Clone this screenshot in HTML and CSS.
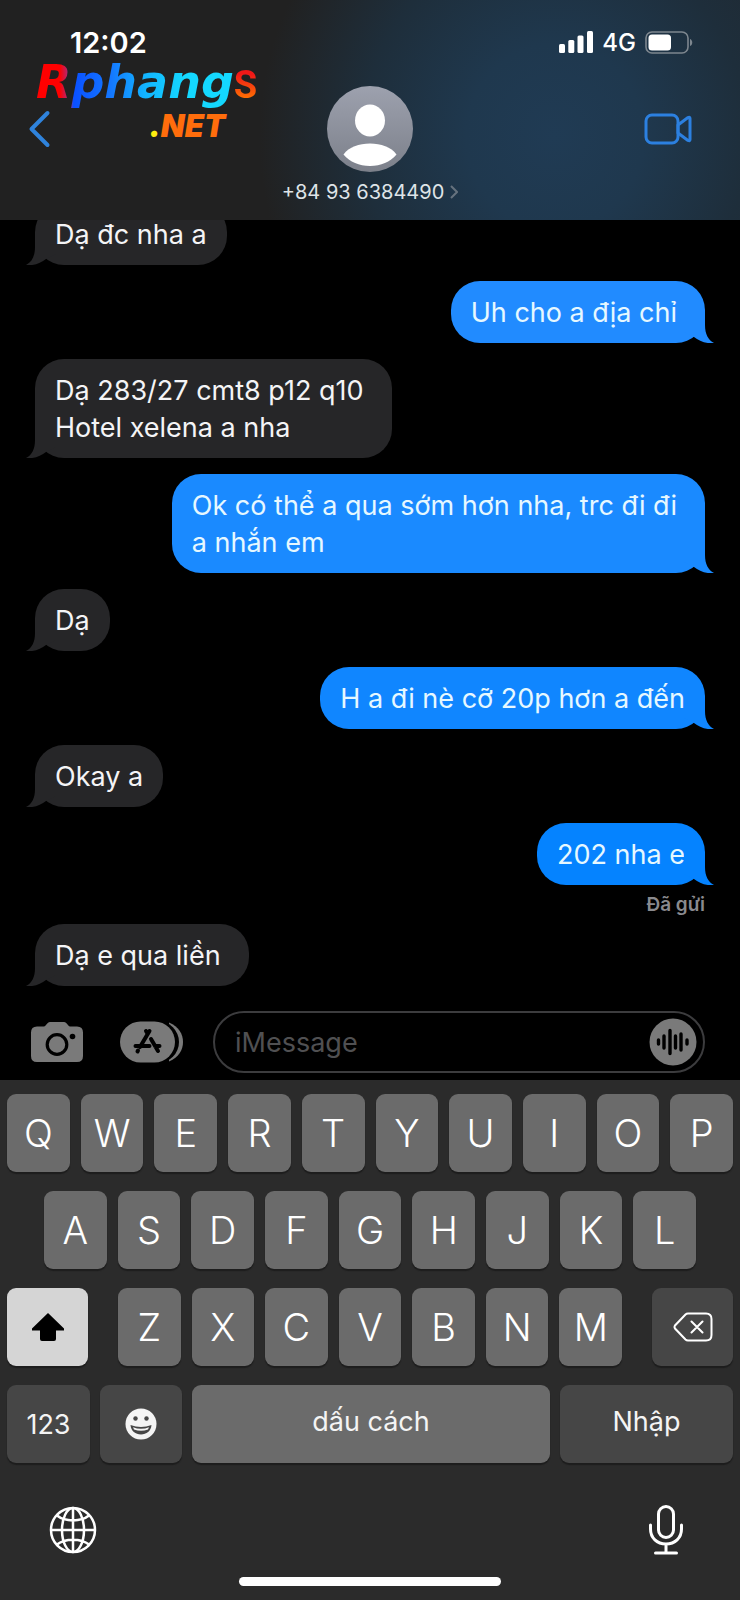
FILE: index.html
```html
<!DOCTYPE html>
<html lang="vi">
<head>
<meta charset="utf-8">
<meta name="viewport" content="width=device-width, initial-scale=1">
<title>+84 93 6384490</title>
<link rel="stylesheet" href="styles.css">
</head>
<body>
<svg class="defs" aria-hidden="true">
  <symbol id="tail" viewBox="0 0 30 31"><path d="M9 0V13C9 22 6 28 0 31C8 32 15 29 20 25L30 20V0Z"/></symbol>
</svg>

<header class="header">
  <div class="status">
    <time class="clock">12:02</time>
    <div class="indicators">
      <svg class="signal" viewBox="0 0 34 22" aria-label="Signal"><rect y="13" width="6" height="9" rx="1.5"/><rect x="9.300" y="9" width="6" height="13" rx="1.500"/><rect x="18.500" y="4.500" width="6" height="17.500" rx="1.500"/><rect x="28" width="6" height="22" rx="1.500"/></svg>
      <span class="network">4G</span>
      <svg class="battery" viewBox="0 0 48 23" aria-label="Battery"><rect x="1" y="1" width="42" height="21" rx="6" fill="none" stroke="#7e878f" stroke-width="1.600"/><rect x="3.500" y="3.500" width="22.500" height="16" rx="3.500" fill="#fff"/><path d="M45 8C48 9 48 14 45 15Z" fill="#7e878f"/></svg>
    </div>
  </div>

  <div class="nav">
    <button class="icon-button" type="button" aria-label="Back">
      <svg class="back" viewBox="0 0 22 38"><path d="M19 3L3 19L19 35"/></svg>
    </button>
    <svg class="avatar" viewBox="0 0 86 86" aria-hidden="true">
      <defs>
        <linearGradient id="avatar-fill" x1="0" y1="0" x2="0" y2="1"><stop offset="0" stop-color="#9da1ae"/><stop offset="1" stop-color="#7c808a"/></linearGradient>
      </defs>
      <circle cx="43" cy="43" r="43" fill="url(#avatar-fill)"/>
      <ellipse cx="43" cy="34.500" rx="15" ry="16" fill="#fff"/>
      <path d="M16.500 68.500C22 61 32 57.500 43 57.500S64 61 69.500 68.500C63 76 54 80 43 80S23 76 16.500 68.500Z" fill="#fff"/>
    </svg>
    <button class="icon-button icon-button--end" type="button" aria-label="FaceTime">
      <svg class="video" viewBox="0 0 48 32"><rect x="2" y="2" width="32" height="28" rx="6"/><path d="M34 12L44 4.500Q46 3.500 46 5.500V26.500Q46 28.500 44 27.500L34 20Z"/></svg>
    </button>
  </div>

  <a class="contact" href="#contact">
    <span>+84 93 6384490</span>
    <svg class="chevron" viewBox="0 0 8 14"><path d="M1 1L7 7L1 13"/></svg>
  </a>

  <div class="logo">
    <div class="logo-name"><span class="logo-word">Rphang</span><span class="logo-s">S</span></div>
    <div class="logo-net"><span class="logo-dot">.</span>NET</div>
  </div>
</header>

<main class="chat">
  <p class="bubble bubble--in">Dạ đc nha a<svg class="tail"><use href="#tail"/></svg></p>
  <p class="bubble bubble--out bubble--spaced tone-1">Uh cho a địa chỉ<svg class="tail"><use href="#tail"/></svg></p>
  <p class="bubble bubble--in bubble--spaced">Dạ 283/27 cmt8 p12 q10<br>Hotel xelena a nha<svg class="tail"><use href="#tail"/></svg></p>
  <p class="bubble bubble--out bubble--spaced tone-2">Ok có thể a qua sớm hơn nha, trc đi đi<br>a nhắn em<svg class="tail"><use href="#tail"/></svg></p>
  <p class="bubble bubble--in">Dạ<svg class="tail"><use href="#tail"/></svg></p>
  <p class="bubble bubble--out tone-3">H a đi nè cỡ 20p hơn a đến<svg class="tail"><use href="#tail"/></svg></p>
  <p class="bubble bubble--in">Okay a<svg class="tail"><use href="#tail"/></svg></p>
  <div class="delivered">
    <p class="bubble bubble--out tone-4">202 nha e<svg class="tail"><use href="#tail"/></svg></p>
    <span class="receipt">Đã gửi</span>
  </div>
  <p class="bubble bubble--in bubble--spaced">Dạ e qua liền<svg class="tail"><use href="#tail"/></svg></p>
</main>

<form class="composer">
  <button class="tool" type="button" aria-label="Camera">
    <svg class="camera" viewBox="0 0 52 42"><path d="M6 5.500H13C15 5.500 16 1 19 1H33C36 1 37 5.500 39 5.500H46Q52 5.500 52 11.500V35Q52 41 46 41H6Q0 41 0 35V11.500Q0 5.500 6 5.500Z" fill="#7a7a7a"/><circle cx="26" cy="23.500" r="9.800" fill="none" stroke="#000" stroke-width="3.200"/><circle cx="41.500" cy="15.500" r="2.800"/></svg>
  </button>
  <button class="tool" type="button" aria-label="Apps">
    <svg class="apps" viewBox="0 0 63 42"><path d="M49 1.500C59 6 63 13 63 21S59 36 49 40.500Z" fill="#7a7a7a"/><rect x="0" y="0" width="59" height="42" rx="21"/><rect y="0.500" width="55" height="41" rx="20.500" fill="#7a7a7a"/><g fill="none" stroke="#000" stroke-width="4" stroke-linecap="round"><path d="M29.500 10L20 26M26 10L27.500 12.500M31 18L38 30M15.500 25H29.500M35 25H39.500M18 29.500L17.500 30.500"/></g></svg>
  </button>
  <div class="field">
    <input class="field-input" type="text" placeholder="iMessage" aria-label="iMessage">
    <button class="tool" type="button" aria-label="Audio">
      <svg class="audio" viewBox="0 0 48 48"><circle cx="24" cy="24" r="23.500" fill="#7a7a7a"/><path d="M9.500 22V26M15 18V30M21 12.500V35.500M26.500 18V30M32 16V32M38 22V26" stroke="#000" stroke-width="3.400" stroke-linecap="round"/></svg>
    </button>
  </div>
</form>

<section class="keyboard" aria-label="Keyboard">
  <div class="row">
    <button class="key" type="button">Q</button><button class="key" type="button">W</button><button class="key" type="button">E</button><button class="key" type="button">R</button><button class="key" type="button">T</button><button class="key" type="button">Y</button><button class="key" type="button">U</button><button class="key" type="button">I</button><button class="key" type="button">O</button><button class="key" type="button">P</button>
  </div>
  <div class="row row--inset">
    <button class="key" type="button">A</button><button class="key" type="button">S</button><button class="key" type="button">D</button><button class="key" type="button">F</button><button class="key" type="button">G</button><button class="key" type="button">H</button><button class="key" type="button">J</button><button class="key" type="button">K</button><button class="key" type="button">L</button>
  </div>
  <div class="row-third">
    <button class="key key--active" type="button" aria-label="Shift">
      <svg class="shift" viewBox="0 0 34 30"><path d="M17 1L33 16.500V18.500H25V27Q25 29 23 29H11Q9 29 9 27V18.500H1V16.500Z"/></svg>
    </button>
    <div class="row">
      <button class="key" type="button">Z</button><button class="key" type="button">X</button><button class="key" type="button">C</button><button class="key" type="button">V</button><button class="key" type="button">B</button><button class="key" type="button">N</button><button class="key" type="button">M</button>
    </div>
    <button class="key key--dark" type="button" aria-label="Delete">
      <svg class="delete" viewBox="0 0 40 30"><path d="M15 1.500H33Q38.500 1.500 38.500 7V23Q38.500 28.500 33 28.500H15Q13.500 28.500 12.500 27.500L2 16.500Q1 15 2 13.500L12.500 2.500Q13.500 1.500 15 1.500ZM18.500 9.500L29.500 20.500M29.500 9.500L18.500 20.500"/></svg>
    </button>
  </div>
  <div class="row-fourth">
    <button class="key key--dark key--text" type="button">123</button>
    <button class="key key--dark" type="button" aria-label="Emoji">
      <svg class="emoji" viewBox="0 0 32 32"><circle cx="16" cy="16" r="15.500" fill="#f4f4f4"/><g fill="#464646"><circle cx="10.500" cy="10.500" r="2.200"/><circle cx="21.500" cy="10.500" r="2.200"/><path d="M5.500 17Q16 21 26.500 17C26 23 21.500 26.500 16 26.500S6 23 5.500 17Z"/></g><path d="M8 19.200Q16 22.500 24 19.200L23 21.500Q16 24 9 21.500Z" fill="#f4f4f4"/></svg>
    </button>
    <button class="key key--text key--word" type="button">dấu cách</button>
    <button class="key key--dark key--text key--word" type="button">Nhập</button>
  </div>
  <div class="dock">
    <button class="tool" type="button" aria-label="Language">
      <svg class="globe" viewBox="0 0 48 48"><circle cx="24" cy="24" r="22"/><ellipse cx="24" cy="24" rx="11" ry="22"/><path d="M24 2V46M2 24H46M8 9.500C16 16 32 16 40 9.500M8 38.500C16 32 32 32 40 38.500"/></svg>
    </button>
    <button class="tool" type="button" aria-label="Dictation">
      <svg class="mic" viewBox="0 0 34 50"><rect x="9.500" y="1.500" width="15" height="31" rx="7.500"/><path d="M1.500 20V24C1.500 33 8 39 17 39S32.500 33 32.500 24V20M17 39V48M6.500 48H27.500"/></svg>
    </button>
  </div>
  <div class="home-bar"></div>
</section>
</body>
</html>
```
FILE: styles.css
```css
* {
  box-sizing: border-box;
}

body {
  display: flex;
  flex-direction: column;
  min-height: 100vh;
  margin: 0;
  background: #000;
  color: #f4f4f6;
  font-family: Inter, "Liberation Sans", sans-serif;
}

button {
  padding: 0;
  border: 0;
  background: none;
  color: inherit;
  font: inherit;
}

svg {
  display: block;
  flex: none;
}

.defs {
  position: absolute;
  width: 0;
  height: 0;
}

/* Header */

.header {
  position: relative;
  z-index: 1;
  padding: 24px 0 16px;
  background:
    radial-gradient(ellipse 40% 140% at 75% 62%, #203b54 0%, #1f384e 30%, #1e2e3b 65%, rgba(32, 33, 34, 0) 100%),
    linear-gradient(90deg, #212121 55%, #202830);
}

.status {
  display: flex;
  align-items: center;
  justify-content: space-between;
  height: 36px;
  padding: 0 47px 0 70px;
}

.clock {
  color: #fff;
  font-size: 29px;
  font-weight: 600;
}

.indicators {
  display: flex;
  align-items: center;
  gap: 9px;
}

.signal {
  width: 34px;
  height: 22px;
  fill: #fff;
}

.network {
  color: #fff;
  font-size: 24px;
  font-weight: 500;
}

.battery {
  width: 48px;
  height: 23px;
}

.nav {
  display: grid;
  grid-template-columns: 1fr auto 1fr;
  align-items: center;
  padding: 0 48px 0 28px;
  margin-top: 26px;
}

.nav .avatar {
  margin-left: 20px;
}

.icon-button {
  justify-self: start;
}

.icon-button--end {
  justify-self: end;
}

.back {
  width: 23px;
  height: 38px;
  fill: none;
  stroke: #2f83dc;
  stroke-width: 4;
  stroke-linecap: round;
  stroke-linejoin: round;
}

.avatar {
  width: 86px;
  height: 86px;
}

.video {
  width: 48px;
  height: 32px;
  fill: none;
  stroke: #2c80e0;
  stroke-width: 3;
  stroke-linejoin: round;
}

.contact {
  display: flex;
  align-items: center;
  justify-content: center;
  gap: 6px;
  margin-top: 8px;
  color: #dfe4e8;
  font-size: 20px;
  line-height: 24px;
  text-decoration: none;
}

.chevron {
  width: 8px;
  height: 14px;
  fill: none;
  stroke: #66727e;
  stroke-width: 2;
}

/* Site mark laid over the header */

.logo {
  position: absolute;
  top: 55px;
  left: 36px;
}

.logo-name {
  display: flex;
  align-items: baseline;
  font-family: "DejaVu Sans", sans-serif;
  font-size: 46px;
  font-weight: 700;
  line-height: 54px;
}

.logo-word {
  background: linear-gradient(90deg, #ff0000 0 12%, #a0308c 17%, #0a50ff 19%, #1478ff 38%, #12b4ff 55%, #14d8ff 75%);
  background-clip: text;
  color: transparent;
  font-style: italic;
}

.logo-s {
  background: linear-gradient(#f01818 30%, #ff7a00 80%);
  background-clip: text;
  color: transparent;
  font-family: Roboto, sans-serif;
  font-size: 38px;
  font-weight: 700;
}

.logo-net {
  margin-right: 32px;
  color: #ff6d0c;
  font-size: 31px;
  font-style: italic;
  font-weight: 900;
  line-height: 28px;
  text-align: right;
}

.logo-dot {
  color: #ffee10;
}

/* Conversation */

.chat {
  display: flex;
  flex: 1;
  flex-direction: column;
  align-items: flex-start;
  gap: 16px;
  margin-top: -17px;
  padding: 0 35px;
}

.bubble {
  position: relative;
  margin: 0;
  padding: 13px 20px 12px;
  border-radius: 29px;
  font-size: 27px;
  line-height: 37px;
}

.bubble--spaced {
  padding-right: 28px;
}

.bubble--in {
  background: #262628;
  fill: #262628;
}

.bubble--out {
  align-self: flex-end;
  color: #e6f8ff;
}

.tail {
  position: absolute;
  bottom: 0;
  left: -9px;
  width: 30px;
  height: 31px;
}

.bubble--out .tail {
  right: -9px;
  left: auto;
  transform: scaleX(-1);
}

.tone-1 {
  background: #218bff;
  fill: #218bff;
}

.tone-2 {
  background: #1a8aff;
  fill: #1a8aff;
}

.tone-3 {
  background: #1086ff;
  fill: #1086ff;
}

.tone-4 {
  background: #0583ff;
  fill: #0583ff;
}

.delivered {
  display: flex;
  flex-direction: column;
  align-self: flex-end;
  gap: 9px;
}

.receipt {
  align-self: flex-end;
  margin-bottom: -8px;
  color: #8a8a8e;
  font-size: 19px;
  font-weight: 600;
  line-height: 22px;
}

/* Composer */

.composer {
  display: flex;
  align-items: center;
  padding: 25px 35px 7px 31px;
}

.camera {
  width: 52px;
  height: 42px;
}

.apps {
  width: 63px;
  height: 42px;
  margin: 0 30px 0 37px;
}

.field {
  display: flex;
  flex: 1;
  align-items: center;
  min-width: 0;
  height: 62px;
  padding: 0 6px 0 20px;
  border: 2px solid #3c3c3e;
  border-radius: 31px;
}

.field-input {
  flex: 1;
  min-width: 0;
  padding: 0;
  border: 0;
  outline: 0;
  background: none;
  color: #f4f4f6;
  font: inherit;
  font-size: 27px;
}

.field-input::placeholder {
  color: #505052;
  opacity: 1;
}

.audio {
  width: 48px;
  height: 48px;
}

/* Keyboard */

.keyboard {
  display: flex;
  flex-direction: column;
  gap: 19px;
  padding: 14px 7px;
  background: #2b2b2b;
}

.row {
  display: flex;
  gap: 11px;
}

.row--inset {
  padding: 0 37px;
}

.row-third {
  display: grid;
  grid-template-columns: 81fr 504fr 81fr;
  gap: 30px;
}

.row-fourth {
  display: grid;
  grid-template-columns: 83fr 82fr 358fr 173fr;
  gap: 10px;
}

.key {
  display: flex;
  flex: 1;
  align-items: center;
  justify-content: center;
  height: 78px;
  border-radius: 9px;
  background: #6b6b6b;
  box-shadow: 0 2px 1px #1d1d1d;
  color: #fff;
  font-size: 38px;
  font-weight: 300;
}

.key--dark {
  background: #464646;
}

.key--active {
  background: #d5d5d5;
}

.key--text {
  color: #f4f4f4;
  font-size: 27px;
  font-weight: 400;
}

.key--word {
  padding-bottom: 6px;
}

.shift {
  width: 34px;
  height: 30px;
}

.delete {
  width: 40px;
  height: 30px;
  fill: none;
  stroke: #fff;
  stroke-width: 2;
  stroke-linecap: round;
}

.emoji {
  width: 32px;
  height: 32px;
}

.dock {
  display: flex;
  align-items: center;
  justify-content: space-between;
  padding: 23px 50px 0 42px;
}

.globe {
  width: 48px;
  height: 48px;
  fill: none;
  stroke: #fff;
  stroke-width: 2.5;
}

.mic {
  width: 34px;
  height: 50px;
  fill: none;
  stroke: #fff;
  stroke-width: 3;
  stroke-linecap: round;
}

.home-bar {
  align-self: center;
  width: 36%;
  height: 9px;
  margin-top: 3px;
  border-radius: 5px;
  background: #fff;
}
```
